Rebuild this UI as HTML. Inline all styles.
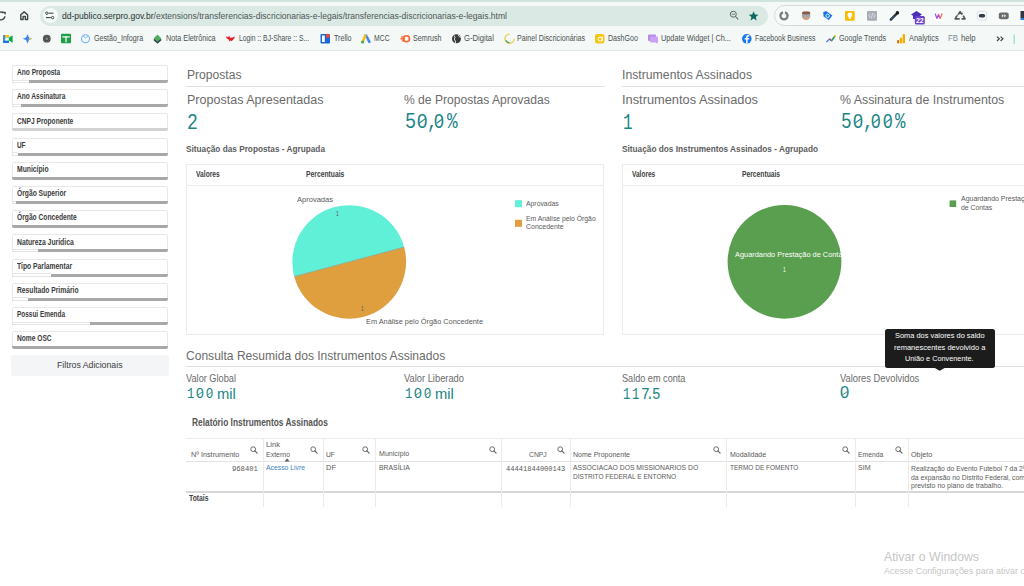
<!DOCTYPE html>
<html><head><meta charset="utf-8"><style>
html,body{margin:0;padding:0;width:1024px;height:586px;overflow:hidden;background:#fff;font-family:"Liberation Sans",sans-serif}
.t{position:absolute;white-space:nowrap}
.a{position:absolute}
</style></head><body>
<div class=a style='left:0;top:0;width:1024px;height:50px;background:#f4f8f7'></div>
<div class=a style='left:0;top:0;width:1024px;height:2px;background:#cfe4df'></div>
<div class=a style='left:0;top:49.5px;width:1024px;height:1px;background:#e3ebe9'></div>
<div class=a style='left:40px;top:5.5px;width:728px;height:20px;border-radius:10px;background:#dbe9e5'></div>
<div class=a style='left:43px;top:8px;width:15px;height:15px;border-radius:8px;background:#f6faf9'></div>
<div class=a style='left:774px;top:5px;width:270px;height:21px;border-radius:11px;border:1px solid #d3dbd9;box-sizing:border-box;background:#f6faf9'></div>
<div class=a style='left:12px;top:65.00px;width:156px;height:18px;box-sizing:border-box;border:1px solid #e8e8e8;border-radius:2px;background:#fff'></div>
<div class=a style='left:12px;top:80.00px;width:156px;height:3px;background:#a8a8a8;border-radius:0 0 2px 2px'></div>
<div class=a style='left:12px;top:79.50px;width:17.3px;height:3.5px;background:#fff;box-sizing:border-box;border:1px solid #e6e6e6;border-right:none;border-radius:0 0 0 2px'></div>
<div class=a style='left:12px;top:89.20px;width:156px;height:18px;box-sizing:border-box;border:1px solid #e8e8e8;border-radius:2px;background:#fff'></div>
<div class=a style='left:12px;top:104.20px;width:156px;height:3px;background:#a8a8a8;border-radius:0 0 2px 2px'></div>
<div class=a style='left:12px;top:103.70px;width:8.8px;height:3.5px;background:#fff;box-sizing:border-box;border:1px solid #e6e6e6;border-right:none;border-radius:0 0 0 2px'></div>
<div class=a style='left:12px;top:113.40px;width:156px;height:18px;box-sizing:border-box;border:1px solid #e8e8e8;border-radius:2px;background:#fff'></div>
<div class=a style='left:12px;top:128.40px;width:156px;height:3px;background:#d2d2d2;border-radius:0 0 2px 2px'></div>
<div class=a style='left:12px;top:137.60px;width:156px;height:18px;box-sizing:border-box;border:1px solid #e8e8e8;border-radius:2px;background:#fff'></div>
<div class=a style='left:12px;top:152.60px;width:156px;height:3px;background:#a8a8a8;border-radius:0 0 2px 2px'></div>
<div class=a style='left:12px;top:152.10px;width:5.9px;height:3.5px;background:#fff;box-sizing:border-box;border:1px solid #e6e6e6;border-right:none;border-radius:0 0 0 2px'></div>
<div class=a style='left:12px;top:161.80px;width:156px;height:18px;box-sizing:border-box;border:1px solid #e8e8e8;border-radius:2px;background:#fff'></div>
<div class=a style='left:12px;top:176.80px;width:156px;height:3px;background:#a8a8a8;border-radius:0 0 2px 2px'></div>
<div class=a style='left:12px;top:186.00px;width:156px;height:18px;box-sizing:border-box;border:1px solid #e8e8e8;border-radius:2px;background:#fff'></div>
<div class=a style='left:12px;top:201.00px;width:156px;height:3px;background:#a8a8a8;border-radius:0 0 2px 2px'></div>
<div class=a style='left:12px;top:200.50px;width:4.2px;height:3.5px;background:#fff;box-sizing:border-box;border:1px solid #e6e6e6;border-right:none;border-radius:0 0 0 2px'></div>
<div class=a style='left:12px;top:210.20px;width:156px;height:18px;box-sizing:border-box;border:1px solid #e8e8e8;border-radius:2px;background:#fff'></div>
<div class=a style='left:12px;top:225.20px;width:156px;height:3px;background:#a8a8a8;border-radius:0 0 2px 2px'></div>
<div class=a style='left:12px;top:234.40px;width:156px;height:18px;box-sizing:border-box;border:1px solid #e8e8e8;border-radius:2px;background:#fff'></div>
<div class=a style='left:12px;top:249.40px;width:156px;height:3px;background:#a8a8a8;border-radius:0 0 2px 2px'></div>
<div class=a style='left:12px;top:248.90px;width:25.9px;height:3.5px;background:#fff;box-sizing:border-box;border:1px solid #e6e6e6;border-right:none;border-radius:0 0 0 2px'></div>
<div class=a style='left:12px;top:258.60px;width:156px;height:18px;box-sizing:border-box;border:1px solid #e8e8e8;border-radius:2px;background:#fff'></div>
<div class=a style='left:12px;top:273.60px;width:156px;height:3px;background:#a8a8a8;border-radius:0 0 2px 2px'></div>
<div class=a style='left:12px;top:273.10px;width:38.7px;height:3.5px;background:#fff;box-sizing:border-box;border:1px solid #e6e6e6;border-right:none;border-radius:0 0 0 2px'></div>
<div class=a style='left:12px;top:282.80px;width:156px;height:18px;box-sizing:border-box;border:1px solid #e8e8e8;border-radius:2px;background:#fff'></div>
<div class=a style='left:12px;top:297.80px;width:156px;height:3px;background:#a8a8a8;border-radius:0 0 2px 2px'></div>
<div class=a style='left:12px;top:297.30px;width:15.6px;height:3.5px;background:#fff;box-sizing:border-box;border:1px solid #e6e6e6;border-right:none;border-radius:0 0 0 2px'></div>
<div class=a style='left:12px;top:307.00px;width:156px;height:18px;box-sizing:border-box;border:1px solid #e8e8e8;border-radius:2px;background:#fff'></div>
<div class=a style='left:12px;top:322.00px;width:156px;height:3px;background:#a8a8a8;border-radius:0 0 2px 2px'></div>
<div class=a style='left:12px;top:321.50px;width:77.7px;height:3.5px;background:#fff;box-sizing:border-box;border:1px solid #e6e6e6;border-right:none;border-radius:0 0 0 2px'></div>
<div class=a style='left:12px;top:331.20px;width:156px;height:18px;box-sizing:border-box;border:1px solid #e8e8e8;border-radius:2px;background:#fff'></div>
<div class=a style='left:12px;top:346.20px;width:156px;height:3px;background:#a8a8a8;border-radius:0 0 2px 2px'></div>
<div class=a style='left:11px;top:355px;width:158px;height:21px;border-radius:2px;background:#f4f5f7'></div>
<div class=a style='left:186px;top:86px;width:419px;height:1px;background:#e0e0e0'></div>
<div class=a style='left:186px;top:164px;width:418px;height:171px;box-sizing:border-box;border:1px solid #ebebeb'></div>
<div class=a style='left:187px;top:184.5px;width:416px;height:1px;background:#ececec'></div>
<div class=a style='left:621.5px;top:86px;width:403px;height:1px;background:#e0e0e0'></div>
<div class=a style='left:622px;top:164px;width:420px;height:171px;box-sizing:border-box;border:1px solid #ebebeb'></div>
<div class=a style='left:623px;top:184.5px;width:420px;height:1px;background:#ececec'></div>
<div class=a style='left:186px;top:366px;width:838px;height:1px;background:#e0e0e0'></div>
<svg class=a style='left:0;top:0' width=1024 height=586>
<path d='M349.20 261.90 L404.16 247.17 A56.9 56.9 0 0 0 294.24 276.63 Z' fill='#60efd7'/>
<path d='M349.20 261.90 L294.24 276.63 A56.9 56.9 0 0 0 404.16 247.17 Z' fill='#e09f3e'/>
<line x1='294.24' y1='276.63' x2='404.16' y2='247.17' stroke='#8f9a7c' stroke-width='0.7'/>
<circle cx='784.5' cy='261.8' r='56.9' fill='#5a9e4f'/>
<rect x='515' y='200.2' width='7' height='7' fill='#60efd7'/>
<rect x='515' y='219.8' width='7' height='7' fill='#e09f3e'/>
<rect x='949.6' y='200.4' width='6.6' height='6.6' fill='#5a9e4f'/>
</svg>
<div class=a style='left:186px;top:438px;width:838px;height:1px;background:#ededed'></div>
<div class=a style='left:186px;top:461px;width:838px;height:1px;background:#e2e2e2'></div>
<div class=a style='left:186px;top:491px;width:838px;height:2px;background:#d6d6d6'></div>
<div class=a style='left:263px;top:438px;width:1px;height:69px;background:#ebebeb'></div>
<div class=a style='left:323px;top:438px;width:1px;height:69px;background:#ebebeb'></div>
<div class=a style='left:375px;top:438px;width:1px;height:69px;background:#ebebeb'></div>
<div class=a style='left:501px;top:438px;width:1px;height:69px;background:#ebebeb'></div>
<div class=a style='left:570px;top:438px;width:1px;height:69px;background:#ebebeb'></div>
<div class=a style='left:726px;top:438px;width:1px;height:69px;background:#ebebeb'></div>
<div class=a style='left:855px;top:438px;width:1px;height:69px;background:#ebebeb'></div>
<div class=a style='left:908px;top:438px;width:1px;height:69px;background:#ebebeb'></div>
<svg class=a style='left:249.5px;top:446.3px' width=8 height=8 viewBox='0 0 8 8'><circle cx='3.2' cy='3.2' r='2.4' fill='none' stroke='#666' stroke-width='0.95'/><line x1='4.9' y1='4.9' x2='7.1' y2='7.1' stroke='#666' stroke-width='1.2' stroke-linecap='round'/></svg>
<svg class=a style='left:309.7px;top:446.3px' width=8 height=8 viewBox='0 0 8 8'><circle cx='3.2' cy='3.2' r='2.4' fill='none' stroke='#666' stroke-width='0.95'/><line x1='4.9' y1='4.9' x2='7.1' y2='7.1' stroke='#666' stroke-width='1.2' stroke-linecap='round'/></svg>
<svg class=a style='left:362.3px;top:446.3px' width=8 height=8 viewBox='0 0 8 8'><circle cx='3.2' cy='3.2' r='2.4' fill='none' stroke='#666' stroke-width='0.95'/><line x1='4.9' y1='4.9' x2='7.1' y2='7.1' stroke='#666' stroke-width='1.2' stroke-linecap='round'/></svg>
<svg class=a style='left:488.9px;top:446.3px' width=8 height=8 viewBox='0 0 8 8'><circle cx='3.2' cy='3.2' r='2.4' fill='none' stroke='#666' stroke-width='0.95'/><line x1='4.9' y1='4.9' x2='7.1' y2='7.1' stroke='#666' stroke-width='1.2' stroke-linecap='round'/></svg>
<svg class=a style='left:556.6px;top:446.3px' width=8 height=8 viewBox='0 0 8 8'><circle cx='3.2' cy='3.2' r='2.4' fill='none' stroke='#666' stroke-width='0.95'/><line x1='4.9' y1='4.9' x2='7.1' y2='7.1' stroke='#666' stroke-width='1.2' stroke-linecap='round'/></svg>
<svg class=a style='left:713.3px;top:446.3px' width=8 height=8 viewBox='0 0 8 8'><circle cx='3.2' cy='3.2' r='2.4' fill='none' stroke='#666' stroke-width='0.95'/><line x1='4.9' y1='4.9' x2='7.1' y2='7.1' stroke='#666' stroke-width='1.2' stroke-linecap='round'/></svg>
<svg class=a style='left:842.4px;top:446.3px' width=8 height=8 viewBox='0 0 8 8'><circle cx='3.2' cy='3.2' r='2.4' fill='none' stroke='#666' stroke-width='0.95'/><line x1='4.9' y1='4.9' x2='7.1' y2='7.1' stroke='#666' stroke-width='1.2' stroke-linecap='round'/></svg>
<svg class=a style='left:895.3px;top:446.3px' width=8 height=8 viewBox='0 0 8 8'><circle cx='3.2' cy='3.2' r='2.4' fill='none' stroke='#666' stroke-width='0.95'/><line x1='4.9' y1='4.9' x2='7.1' y2='7.1' stroke='#666' stroke-width='1.2' stroke-linecap='round'/></svg>
<svg class=a style='left:284px;top:458px' width=7 height=4><path d='M0.5 3.6 L3.1 0.4 L5.7 3.6 Z' fill='#595959'/></svg>
<div class=a style='left:885px;top:329px;width:109.5px;height:38.6px;border-radius:2.5px;background:#1c1c1c'></div>
<svg class=a style='left:933px;top:367px' width=14 height=5><path d='M0 0 L6.7 3.8 L13.4 0 Z' fill='#1c1c1c'/></svg>
<svg class=a style='left:0;top:0' width=1024 height=50>
<!-- reload (cut off) -->
<path d='M4.9 16.2 A3.9 3.9 0 1 1 3.6 13' fill='none' stroke='#3c4745' stroke-width='1.4'/>
<path d='M2.6 11.6 L5.9 11.9 L5.6 15.1 Z' fill='#3c4745'/>
<!-- home -->
<path d='M20.8 19.5 V14.8 L24.2 11.9 L27.6 14.8 V19.5 H25.3 V16.4 H23.1 V19.5 Z' fill='none' stroke='#3c4745' stroke-width='1.4' stroke-linejoin='round'/>
<!-- site info tune icon -->
<line x1='48.6' y1='13.2' x2='53.4' y2='13.2' stroke='#3c4745' stroke-width='1.1'/>
<circle cx='46.8' cy='13.2' r='1.2' fill='none' stroke='#3c4745' stroke-width='1'/>
<line x1='46' y1='17.6' x2='50.8' y2='17.6' stroke='#3c4745' stroke-width='1.1'/>
<circle cx='52.6' cy='17.6' r='1.2' fill='none' stroke='#3c4745' stroke-width='1'/>
<!-- zoom -->
<circle cx='733.3' cy='14.2' r='3' fill='none' stroke='#5f6665' stroke-width='1'/>
<line x1='731.8' y1='14.2' x2='734.8' y2='14.2' stroke='#5f6665' stroke-width='0.9'/>
<line x1='735.5' y1='16.5' x2='738.2' y2='19.4' stroke='#5f6665' stroke-width='1.1'/>
<!-- star -->
<path d='M753.6 11.2 L755 14.6 L758.5 14.8 L755.8 17 L756.7 20.4 L753.6 18.5 L750.5 20.4 L751.4 17 L748.7 14.8 L752.2 14.6 Z' fill='#0f6863'/>
<!-- ext 1 circle O -->
<path d='M785 12.34 A3.6 3.6 0 1 1 783 12.34' fill='none' stroke='#7a7a7a' stroke-width='2.3'/>
<!-- face -->
<circle cx='806.1' cy='15.7' r='4.3' fill='#d49a7c'/>
<rect x='802' y='11.5' width='8.3' height='3' rx='1.5' fill='#8a5a45'/>
<rect x='802.5' y='14.6' width='3' height='2.4' rx='0.8' fill='#7fb0d0'/>
<rect x='806.7' y='14.6' width='3' height='2.4' rx='0.8' fill='#7fb0d0'/>
<!-- tag -->
<path d='M823.2 12.2 L826 11 L832.4 15.4 L828.8 20 L823.6 16.6 Z' fill='#1a73e8'/>
<circle cx='827.6' cy='15.8' r='1.7' fill='none' stroke='#fff' stroke-width='0.9'/>
<!-- keep bulb -->
<rect x='845' y='11' width='9.7' height='9.7' rx='1' fill='#fbbc04'/>
<circle cx='849.85' cy='15' r='2.4' fill='#fff'/>
<rect x='848.7' y='16.8' width='2.3' height='2' fill='#fff'/>
<!-- code box -->
<rect x='867' y='11' width='10' height='9.7' rx='1' fill='#a9abb6'/>
<path d='M870.3 13.6 L869 15.8 L870.3 18 M873.7 13.6 L875 15.8 L873.7 18 M872.6 13.2 L871.4 18.4' fill='none' stroke='#e8e9ee' stroke-width='0.8'/>
<!-- dropper -->
<path d='M890.8 19.6 L896 14.4' stroke='#2a2a2a' stroke-width='2.4' stroke-linecap='round'/>
<path d='M891.2 19.2 L894.5 15.9' stroke='#3c6fd8' stroke-width='1' stroke-linecap='round'/>
<circle cx='897.4' cy='12.9' r='1.8' fill='#1d1d1d'/>
<!-- mortarboard + badge -->
<path d='M911 14.5 L916.5 11 L922 14.5 L916.5 18 Z' fill='#4a2fbd'/>
<rect x='913' y='15' width='7' height='4' fill='#4a2fbd'/>
<rect x='914.8' y='16.1' width='10' height='8.4' rx='1.5' fill='#6a3fc8'/>
<text x='919.8' y='23.2' font-family='Liberation Sans' font-size='7' font-weight='700' fill='#fff' text-anchor='middle'>22</text>
<!-- W -->
<defs><linearGradient id='wg' x1='0' x2='1'><stop offset='0' stop-color='#6a5cff'/><stop offset='0.5' stop-color='#e040c0'/><stop offset='1' stop-color='#ff7a3a'/></linearGradient></defs>
<rect x='933.5' y='11' width='10' height='10' rx='2' fill='#ffffff'/>
<path d='M935.2 13.6 L936.8 18.4 L938.6 14.6 L940.2 18.4 L942.2 13.2' fill='none' stroke='url(#wg)' stroke-width='1.3' stroke-linejoin='round'/>
<!-- recycle -->
<path d='M958.2 14.6 L960.1 11.6 L962 14.6 M963.2 15.6 L965 18.8 L961.6 18.8 M957 15.6 L955.2 18.8 L958.8 18.8' fill='none' stroke='#555' stroke-width='1.7' stroke-linejoin='round'/>
<path d='M961.2 13.2 L962.8 12.6 L962.6 14.4 Z M959.5 20.2 L958.4 18.8 L959.9 17.8 Z M956.3 15.2 L957.8 14.4 L958.2 16 Z' fill='#555'/>
<!-- square oval -->
<rect x='977.3' y='11.3' width='9.4' height='8.8' rx='2' fill='#fbfcfd' stroke='#cfd6dc' stroke-width='0.7'/>
<rect x='978.8' y='14' width='6.4' height='3.4' rx='1.7' fill='#2f3d4a'/>
<!-- video -->
<rect x='998.8' y='12.5' width='9.9' height='6.7' rx='2' fill='#6b6b6b'/>
<path d='M1001.9 14.3 L1003.8 15.85 L1001.9 17.4 Z M1004.2 14.3 L1006.1 15.85 L1004.2 17.4 Z' fill='#f0f0f0'/>
<!-- partial icon -->
<rect x='1020.5' y='11' width='5' height='7' fill='#303540'/>
<rect x='1020.5' y='18' width='5' height='2' fill='#2b7de0'/>

<!-- bookmarks -->
<!-- meet -->
<path d='M3.2 35 H9 V43 H3.2 Z' fill='#1e8e3e'/>
<path d='M3.2 35 H9 V37.2 H3.2 Z' fill='#fbbc04'/>
<path d='M3.2 35 L5 35 V43 H3.2 Z' fill='#4285f4'/>
<path d='M3.2 40.8 H9 V43 H3.2 Z' fill='#1a73e8'/>
<path d='M5.2 37.4 H8.8 V40.6 H5.2 Z' fill='#ffffff'/>
<path d='M9 37.5 L12.6 35.2 V42.8 L9 40.5 Z' fill='#00ac47'/>
<!-- sparkle star blue/yellow -->
<path d='M27.5 34.2 L29 37.6 L32.2 38.8 L29 40 L27.5 43.4 L26 40 L22.8 38.8 L26 37.6 Z' fill='#3b82f6'/>
<path d='M29 37.6 L32.2 38.8 L29.5 39.6 L28.5 42.5 Z' fill='#f6c33b'/>
<!-- gear gray (openai-like) -->
<circle cx='46.8' cy='38.7' r='3.9' fill='#4a4a4a'/>
<circle cx='46.8' cy='38.7' r='2.9' fill='none' stroke='#9a9a9a' stroke-width='0.6' stroke-dasharray='1.2 0.8'/>
<circle cx='46.8' cy='38.7' r='1.3' fill='#8a8a8a'/>
<!-- green sheet -->
<rect x='61' y='33.7' width='10' height='9.6' rx='1' fill='#1e9e47'/>
<rect x='62.3' y='36.3' width='7.4' height='1.2' fill='#fff'/>
<rect x='65.4' y='36.3' width='1.2' height='6' fill='#fff'/>
<!-- circle outline blue -->
<circle cx='85.5' cy='38.8' r='4' fill='none' stroke='#6fb4f5' stroke-width='1.1'/>
<path d='M83 35.8 L85.5 38.2 L88 35.8' fill='none' stroke='#6fb4f5' stroke-width='1'/>
<!-- green diamond -->
<path d='M157.5 34.4 L161.3 38.2 L157.5 42 L153.7 38.2 Z' fill='#4caf5e'/>
<path d='M153.7 39.2 L157.5 43.2 L161.3 39.2 L161.3 40.6 L157.5 43.6 L153.7 40.6 Z' fill='#2b3a44'/>
<path d='M154.2 39.4 L157.5 42.6 L160.8 39.4' fill='none' stroke='#2b3a44' stroke-width='1.3'/>
<!-- red bird -->
<path d='M225.8 36.2 L228 37.2 L229.2 35.8 L230 37.8 L232.4 37.6 L235.2 36.4 L233.8 39 L231.6 41.2 L230.4 40.2 L229.6 41.8 L228.6 39.6 L226.8 38.6 Z' fill='#e2202a'/>
<!-- trello -->
<rect x='320.5' y='34' width='9.5' height='9.5' rx='1.3' fill='#1868db'/>
<rect x='322' y='35.5' width='2.8' height='6.5' fill='#fff'/>
<circle cx='327.8' cy='35.8' r='2.1' fill='#e5493a'/>
<!-- google ads -->
<path d='M364.4 34.6 L367 34.6 L371 42.2 L368.6 43.2 Z' fill='#4285f4'/>
<path d='M364.4 34.6 L366.8 35.6 L363.5 42.6 L361.4 41.8 Z' fill='#fbbc04'/>
<circle cx='362.6' cy='42' r='1.5' fill='#34a853'/>
<!-- semrush -->
<path d='M400.5 38.8 H405' stroke='#ff642d' stroke-width='1.5'/>
<circle cx='406.5' cy='38.8' r='3' fill='none' stroke='#ff642d' stroke-width='1.6'/>
<path d='M401 36.8 H404.2 M401.8 40.8 H404.2' stroke='#ff642d' stroke-width='1.2'/>
<!-- globe -->
<circle cx='456.5' cy='38.8' r='4.5' fill='#3a3a3a'/>
<path d='M454 35.4 Q456 37.5 454.3 39 Q455.8 41 455.5 43 M458 34.8 Q459 37 460.8 37.5' fill='none' stroke='#eee' stroke-width='0.9'/>
<!-- painel icon -->
<path d='M509.5 34.3 A4.5 4.5 0 1 0 514 38.8' fill='none' stroke='#e7d66b' stroke-width='1.5'/>
<path d='M506 40 A3 3 0 0 0 509.5 42.5' fill='none' stroke='#3fa06a' stroke-width='1.2'/>
<!-- dashgoo -->
<rect x='595' y='34' width='9.5' height='9.5' rx='2' fill='#f5c518'/>
<circle cx='600.2' cy='39.2' r='2' fill='none' stroke='#fff' stroke-width='1'/>
<line x1='602.2' y1='36.4' x2='602.2' y2='41.2' stroke='#fff' stroke-width='1'/>
<!-- purple chat -->
<rect x='648' y='34.5' width='8' height='6.5' rx='1' fill='#b68bea'/>
<rect x='650' y='36.5' width='8' height='6' rx='1' fill='#c9a3f2'/>
<path d='M655 42 L657.5 43.7 V41 Z' fill='#c9a3f2'/>
<!-- facebook -->
<circle cx='746.8' cy='38.8' r='4.8' fill='#1877f2'/>
<path d='M747.6 43.6 V39.6 H749 L749.2 38.1 H747.6 V37.2 Q747.6 36.5 748.4 36.5 H749.3 V35.2 Q748.6 35.1 748 35.1 Q746.1 35.1 746.1 37 V38.1 H744.7 V39.6 H746.1 V43.6 Z' fill='#fff'/>
<!-- google trends -->
<path d='M826.5 42 L829.5 39 L831.5 40.8 L835 36' fill='none' stroke='#4285f4' stroke-width='1.4' stroke-linejoin='round'/>
<path d='M829.5 39 L831.5 40.8' stroke='#ea4335' stroke-width='1.4'/>
<path d='M831.5 40.8 L835 36' stroke='#34a853' stroke-width='1.4'/>
<circle cx='835' cy='36' r='0.9' fill='#fbbc04'/>
<!-- analytics -->
<rect x='897' y='40' width='2.2' height='3.5' rx='1' fill='#e37400'/>
<rect x='899.8' y='37.5' width='2.2' height='6' rx='1' fill='#f9ab00'/>
<rect x='902.6' y='34' width='2.4' height='9.5' rx='1' fill='#f9ab00'/>
<!-- chevrons -->
<path d='M997 36.6 L999.3 38.8 L997 41 M1000.6 36.6 L1002.9 38.8 L1000.6 41' fill='none' stroke='#3c4745' stroke-width='1.2'/>
<!-- teal bar -->
<rect x='1013.6' y='34.5' width='1.2' height='9.5' fill='#8fdcd2'/>
</svg>
<svg class=a style='left:0;top:0' width=1024 height=586><line x1='419.18' y1='123.21' x2='424.88' y2='118.94' stroke='#1a8585' stroke-width='1.06'/></svg>
<svg class=a style='left:0;top:0' width=1024 height=586><line x1='436.90' y1='123.21' x2='442.34' y2='118.94' stroke='#1a8585' stroke-width='1.06'/></svg>
<svg class=a style='left:0;top:0' width=1024 height=586><line x1='855.12' y1='123.18' x2='860.62' y2='118.98' stroke='#1a8585' stroke-width='1.05'/></svg>
<svg class=a style='left:0;top:0' width=1024 height=586><line x1='873.24' y1='123.18' x2='878.49' y2='118.98' stroke='#1a8585' stroke-width='1.05'/></svg>
<svg class=a style='left:0;top:0' width=1024 height=586><line x1='885.14' y1='123.18' x2='890.39' y2='118.98' stroke='#1a8585' stroke-width='1.05'/></svg>
<svg class=a style='left:0;top:0' width=1024 height=586><line x1='197.94' y1='394.93' x2='202.23' y2='391.97' stroke='#1a8585' stroke-width='0.85'/></svg>
<svg class=a style='left:0;top:0' width=1024 height=586><line x1='207.82' y1='394.93' x2='211.72' y2='391.97' stroke='#1a8585' stroke-width='0.85'/></svg>
<svg class=a style='left:0;top:0' width=1024 height=586><line x1='415.94' y1='394.93' x2='420.23' y2='391.97' stroke='#1a8585' stroke-width='0.85'/></svg>
<svg class=a style='left:0;top:0' width=1024 height=586><line x1='425.82' y1='394.93' x2='429.72' y2='391.97' stroke='#1a8585' stroke-width='0.85'/></svg>
<svg class=a style='left:0;top:0' width=1024 height=586><line x1='841.98' y1='395.04' x2='847.04' y2='391.85' stroke='#1a8585' stroke-width='0.85'/></svg>
<div class=t style='left:62.00px;transform-origin:0 0;top:12.14px;font-size:8.7px;line-height:8.7px;font-weight:400;color:#4d5553;font-family:"Liberation Sans", sans-serif;transform:scaleX(0.9839);'><span style='color:#2a302f'>dd-publico.serpro.gov.br</span>/extensions/transferencias-discricionarias-e-legais/transferencias-discricionarias-e-legais.html</div>
<div class=t style='left:16.50px;transform-origin:0 0;top:69.16px;font-size:8.2px;line-height:8.2px;font-weight:700;color:#3a3a3a;font-family:"Liberation Sans", sans-serif;transform:scaleX(0.8047);'>Ano Proposta</div>
<div class=t style='left:16.50px;transform-origin:0 0;top:93.36px;font-size:8.2px;line-height:8.2px;font-weight:700;color:#3a3a3a;font-family:"Liberation Sans", sans-serif;transform:scaleX(0.8023);'>Ano Assinatura</div>
<div class=t style='left:16.50px;transform-origin:0 0;top:117.56px;font-size:8.2px;line-height:8.2px;font-weight:700;color:#3a3a3a;font-family:"Liberation Sans", sans-serif;transform:scaleX(0.8088);'>CNPJ Proponente</div>
<div class=t style='left:16.50px;transform-origin:0 0;top:141.76px;font-size:8.2px;line-height:8.2px;font-weight:700;color:#3a3a3a;font-family:"Liberation Sans", sans-serif;transform:scaleX(0.7783);'>UF</div>
<div class=t style='left:16.50px;transform-origin:0 0;top:165.96px;font-size:8.2px;line-height:8.2px;font-weight:700;color:#3a3a3a;font-family:"Liberation Sans", sans-serif;transform:scaleX(0.8272);'>Município</div>
<div class=t style='left:16.50px;transform-origin:0 0;top:190.16px;font-size:8.2px;line-height:8.2px;font-weight:700;color:#3a3a3a;font-family:"Liberation Sans", sans-serif;transform:scaleX(0.8191);'>Órgão Superior</div>
<div class=t style='left:16.50px;transform-origin:0 0;top:214.36px;font-size:8.2px;line-height:8.2px;font-weight:700;color:#3a3a3a;font-family:"Liberation Sans", sans-serif;transform:scaleX(0.8164);'>Órgão Concedente</div>
<div class=t style='left:16.50px;transform-origin:0 0;top:238.56px;font-size:8.2px;line-height:8.2px;font-weight:700;color:#3a3a3a;font-family:"Liberation Sans", sans-serif;transform:scaleX(0.8306);'>Natureza Jurídica</div>
<div class=t style='left:16.50px;transform-origin:0 0;top:262.76px;font-size:8.2px;line-height:8.2px;font-weight:700;color:#3a3a3a;font-family:"Liberation Sans", sans-serif;transform:scaleX(0.8255);'>Tipo Parlamentar</div>
<div class=t style='left:16.50px;transform-origin:0 0;top:286.96px;font-size:8.2px;line-height:8.2px;font-weight:700;color:#3a3a3a;font-family:"Liberation Sans", sans-serif;transform:scaleX(0.8191);'>Resultado Primário</div>
<div class=t style='left:16.50px;transform-origin:0 0;top:311.16px;font-size:8.2px;line-height:8.2px;font-weight:700;color:#3a3a3a;font-family:"Liberation Sans", sans-serif;transform:scaleX(0.7871);'>Possui Emenda</div>
<div class=t style='left:16.50px;transform-origin:0 0;top:335.36px;font-size:8.2px;line-height:8.2px;font-weight:700;color:#3a3a3a;font-family:"Liberation Sans", sans-serif;transform:scaleX(0.8091);'>Nome OSC</div>
<div class=t style='left:57.00px;transform-origin:0 0;top:361.13px;font-size:9.3px;line-height:9.3px;font-weight:400;color:#3a3a3a;font-family:"Liberation Sans", sans-serif;transform:scaleX(0.9389);'>Filtros Adicionais</div>
<div class=t style='left:186.50px;transform-origin:0 0;top:69.34px;font-size:12px;line-height:12px;font-weight:400;color:#6b6b6b;font-family:"Liberation Sans", sans-serif;transform:scaleX(1.0087);'>Propostas</div>
<div class=t style='left:186.50px;transform-origin:0 0;top:93.79px;font-size:12.3px;line-height:12.3px;font-weight:400;color:#6b6b6b;font-family:"Liberation Sans", sans-serif;transform:scaleX(1.0187);'>Propostas Apresentadas</div>
<div class=t style='left:404.20px;transform-origin:0 0;top:93.79px;font-size:12.3px;line-height:12.3px;font-weight:400;color:#6b6b6b;font-family:"Liberation Sans", sans-serif;transform:scaleX(0.9829);'>% de Propostas Aprovadas</div>
<div class=t style='left:186.00px;transform-origin:0 0;top:143.87px;font-size:9.6px;line-height:9.6px;font-weight:700;color:#5c5c5c;font-family:"Liberation Sans", sans-serif;transform:scaleX(0.8595);'>Situação das Propostas - Agrupada</div>
<div class=t style='left:196.00px;transform-origin:0 0;top:170.96px;font-size:8.2px;line-height:8.2px;font-weight:700;color:#404040;font-family:"Liberation Sans", sans-serif;transform:scaleX(0.8133);'>Valores</div>
<div class=t style='left:305.70px;transform-origin:0 0;top:170.96px;font-size:8.2px;line-height:8.2px;font-weight:700;color:#404040;font-family:"Liberation Sans", sans-serif;transform:scaleX(0.8250);'>Percentuais</div>
<div class=t style='left:622.10px;transform-origin:0 0;top:69.14px;font-size:12px;line-height:12px;font-weight:400;color:#6b6b6b;font-family:"Liberation Sans", sans-serif;transform:scaleX(1.0204);'>Instrumentos Assinados</div>
<div class=t style='left:622.00px;transform-origin:0 0;top:93.89px;font-size:12.3px;line-height:12.3px;font-weight:400;color:#6b6b6b;font-family:"Liberation Sans", sans-serif;transform:scaleX(1.0416);'>Instrumentos Assinados</div>
<div class=t style='left:840.00px;transform-origin:0 0;top:93.89px;font-size:12.3px;line-height:12.3px;font-weight:400;color:#6b6b6b;font-family:"Liberation Sans", sans-serif;transform:scaleX(1.0057);'>% Assinatura de Instrumentos</div>
<div class=t style='left:622.10px;transform-origin:0 0;top:144.07px;font-size:9.6px;line-height:9.6px;font-weight:700;color:#5c5c5c;font-family:"Liberation Sans", sans-serif;transform:scaleX(0.8618);'>Situação dos Instrumentos Assinados - Agrupado</div>
<div class=t style='left:632.20px;transform-origin:0 0;top:170.96px;font-size:8.2px;line-height:8.2px;font-weight:700;color:#404040;font-family:"Liberation Sans", sans-serif;transform:scaleX(0.7961);'>Valores</div>
<div class=t style='left:741.70px;transform-origin:0 0;top:170.96px;font-size:8.2px;line-height:8.2px;font-weight:700;color:#404040;font-family:"Liberation Sans", sans-serif;transform:scaleX(0.8207);'>Percentuais</div>
<div class=t style='left:186.00px;transform-origin:0 0;top:348.66px;font-size:13.4px;line-height:13.4px;font-weight:400;color:#6b6b6b;font-family:"Liberation Sans", sans-serif;transform:scaleX(0.8998);'>Consulta Resumida dos Instrumentos Assinados</div>
<div class=t style='left:186.00px;transform-origin:0 0;top:372.53px;font-size:10.6px;line-height:10.6px;font-weight:400;color:#6b6b6b;font-family:"Liberation Sans", sans-serif;transform:scaleX(0.8693);'>Valor Global</div>
<div class=t style='left:404.20px;transform-origin:0 0;top:372.53px;font-size:10.6px;line-height:10.6px;font-weight:400;color:#6b6b6b;font-family:"Liberation Sans", sans-serif;transform:scaleX(0.8807);'>Valor Liberado</div>
<div class=t style='left:622.20px;transform-origin:0 0;top:372.53px;font-size:10.6px;line-height:10.6px;font-weight:400;color:#6b6b6b;font-family:"Liberation Sans", sans-serif;transform:scaleX(0.8611);'>Saldo em conta</div>
<div class=t style='left:839.50px;transform-origin:0 0;top:372.53px;font-size:10.6px;line-height:10.6px;font-weight:400;color:#6b6b6b;font-family:"Liberation Sans", sans-serif;transform:scaleX(0.8820);'>Valores Devolvidos</div>
<div class=t style='left:191.80px;transform-origin:0 0;top:417.78px;font-size:10.3px;line-height:10.3px;font-weight:700;color:#555555;font-family:"Liberation Sans", sans-serif;transform:scaleX(0.8119);'>Relatório Instrumentos Assinados</div>
<div class=t style='left:297.40px;transform-origin:0 0;top:196.13px;font-size:8px;line-height:8px;font-weight:400;color:#595959;font-family:"Liberation Sans", sans-serif;transform:scaleX(0.9412);'>Aprovadas</div>
<div class=t style='left:335.50px;transform-origin:0 0;top:209.77px;font-size:7px;line-height:7px;font-weight:400;color:#595959;font-family:"Liberation Sans", sans-serif;transform:scaleX(0.7168);'>1</div>
<div class=t style='left:360.80px;transform-origin:0 0;top:305.07px;font-size:7px;line-height:7px;font-weight:400;color:#595959;font-family:"Liberation Sans", sans-serif;transform:scaleX(0.7168);'>1</div>
<div class=t style='left:365.80px;transform-origin:0 0;top:317.83px;font-size:8px;line-height:8px;font-weight:400;color:#595959;font-family:"Liberation Sans", sans-serif;transform:scaleX(0.9198);'>Em Análise pelo Órgão Concedente</div>
<div class=t style='left:526.30px;transform-origin:0 0;top:199.54px;font-size:8.1px;line-height:8.1px;font-weight:400;color:#595959;font-family:"Liberation Sans", sans-serif;transform:scaleX(0.8449);'>Aprovadas</div>
<div class=t style='left:526.30px;transform-origin:0 0;top:215.04px;font-size:8.1px;line-height:8.1px;font-weight:400;color:#595959;font-family:"Liberation Sans", sans-serif;transform:scaleX(0.8418);'>Em Análise pelo Órgão</div>
<div class=t style='left:526.30px;transform-origin:0 0;top:223.14px;font-size:8.1px;line-height:8.1px;font-weight:400;color:#595959;font-family:"Liberation Sans", sans-serif;transform:scaleX(0.8613);'>Concedente</div>
<div class=t style='left:960.80px;transform-origin:0 0;top:195.04px;font-size:8.1px;line-height:8.1px;font-weight:400;color:#595959;font-family:"Liberation Sans", sans-serif;transform:scaleX(0.8600);'>Aguardando Prestação</div>
<div class=t style='left:960.80px;transform-origin:0 0;top:203.64px;font-size:8.1px;line-height:8.1px;font-weight:400;color:#595959;font-family:"Liberation Sans", sans-serif;transform:scaleX(0.8454);'>de Contas</div>
<div class=t style='left:735.00px;transform-origin:0 0;top:251.47px;font-size:7.6px;line-height:7.6px;font-weight:400;color:#ffffff;font-family:"Liberation Sans", sans-serif;transform:scaleX(0.9718);'>Aguardando Prestação de Conta</div>
<div class=t style='left:783.20px;transform-origin:0 0;top:265.77px;font-size:7px;line-height:7px;font-weight:400;color:#ffffff;font-family:"Liberation Sans", sans-serif;transform:scaleX(0.7168);'>1</div>
<div class=t style='left:190.70px;transform-origin:0 0;top:450.57px;font-size:7.6px;line-height:7.6px;font-weight:400;color:#595959;font-family:"Liberation Sans", sans-serif;transform:scaleX(0.9570);'>Nº Instrumento</div>
<div class=t style='left:265.90px;transform-origin:0 0;top:441.07px;font-size:7.6px;line-height:7.6px;font-weight:400;color:#595959;font-family:"Liberation Sans", sans-serif;transform:scaleX(1.0045);'>Link</div>
<div class=t style='left:265.90px;transform-origin:0 0;top:450.57px;font-size:7.6px;line-height:7.6px;font-weight:400;color:#595959;font-family:"Liberation Sans", sans-serif;transform:scaleX(0.9170);'>Externo</div>
<div class=t style='left:326.00px;transform-origin:0 0;top:450.57px;font-size:7.6px;line-height:7.6px;font-weight:400;color:#595959;font-family:"Liberation Sans", sans-serif;transform:scaleX(0.8889);'>UF</div>
<div class=t style='left:378.50px;transform-origin:0 0;top:450.47px;font-size:7.6px;line-height:7.6px;font-weight:400;color:#595959;font-family:"Liberation Sans", sans-serif;transform:scaleX(0.9292);'>Município</div>
<div class=t style='left:528.50px;transform-origin:0 0;top:450.57px;font-size:7.6px;line-height:7.6px;font-weight:400;color:#595959;font-family:"Liberation Sans", sans-serif;transform:scaleX(0.8920);'>CNPJ</div>
<div class=t style='left:572.50px;transform-origin:0 0;top:450.57px;font-size:7.6px;line-height:7.6px;font-weight:400;color:#595959;font-family:"Liberation Sans", sans-serif;transform:scaleX(0.9247);'>Nome Proponente</div>
<div class=t style='left:729.70px;transform-origin:0 0;top:450.57px;font-size:7.6px;line-height:7.6px;font-weight:400;color:#595959;font-family:"Liberation Sans", sans-serif;transform:scaleX(0.9194);'>Modalidade</div>
<div class=t style='left:858.40px;transform-origin:0 0;top:450.57px;font-size:7.6px;line-height:7.6px;font-weight:400;color:#595959;font-family:"Liberation Sans", sans-serif;transform:scaleX(0.8906);'>Emenda</div>
<div class=t style='left:911.10px;transform-origin:0 0;top:450.57px;font-size:7.6px;line-height:7.6px;font-weight:400;color:#595959;font-family:"Liberation Sans", sans-serif;transform:scaleX(0.9520);'>Objeto</div>
<div class=t style='left:232.00px;transform-origin:0 0;top:464.77px;font-size:8px;line-height:8px;font-weight:400;color:#595959;font-family:"Liberation Mono", monospace;transform:scaleX(0.8954);'>968401</div>
<div class=t style='left:266.00px;transform-origin:0 0;top:464.30px;font-size:7.8px;line-height:7.8px;font-weight:400;color:#3f7fbf;font-family:"Liberation Sans", sans-serif;transform:scaleX(0.8736);'>Acesso Livre</div>
<div class=t style='left:326.00px;transform-origin:0 0;top:464.30px;font-size:7.8px;line-height:7.8px;font-weight:400;color:#595959;font-family:"Liberation Sans", sans-serif;transform:scaleX(0.9610);'>DF</div>
<div class=t style='left:378.50px;transform-origin:0 0;top:464.20px;font-size:7.8px;line-height:7.8px;font-weight:400;color:#595959;font-family:"Liberation Sans", sans-serif;transform:scaleX(0.8773);'>BRASÍLIA</div>
<div class=t style='left:505.80px;transform-origin:0 0;top:464.67px;font-size:8px;line-height:8px;font-weight:400;color:#595959;font-family:"Liberation Mono", monospace;transform:scaleX(0.8822);'>44441844000143</div>
<div class=t style='left:572.50px;transform-origin:0 0;top:464.20px;font-size:7.8px;line-height:7.8px;font-weight:400;color:#595959;font-family:"Liberation Sans", sans-serif;transform:scaleX(0.8704);'>ASSOCIACAO DOS MISSIONARIOS DO</div>
<div class=t style='left:572.50px;transform-origin:0 0;top:473.30px;font-size:7.8px;line-height:7.8px;font-weight:400;color:#595959;font-family:"Liberation Sans", sans-serif;transform:scaleX(0.8418);'>DISTRITO FEDERAL E ENTORNO</div>
<div class=t style='left:729.70px;transform-origin:0 0;top:464.20px;font-size:7.8px;line-height:7.8px;font-weight:400;color:#595959;font-family:"Liberation Sans", sans-serif;transform:scaleX(0.8312);'>TERMO DE FOMENTO</div>
<div class=t style='left:858.40px;transform-origin:0 0;top:464.20px;font-size:7.8px;line-height:7.8px;font-weight:400;color:#595959;font-family:"Liberation Sans", sans-serif;transform:scaleX(0.9081);'>SIM</div>
<div class=t style='left:911.10px;transform-origin:0 0;top:464.50px;font-size:7.8px;line-height:7.8px;font-weight:400;color:#595959;font-family:"Liberation Sans", sans-serif;transform:scaleX(0.8750);'>Realização do Evento Futebol 7 da 2ª etapa</div>
<div class=t style='left:911.10px;transform-origin:0 0;top:473.60px;font-size:7.8px;line-height:7.8px;font-weight:400;color:#595959;font-family:"Liberation Sans", sans-serif;transform:scaleX(0.8800);'>da expansão no Distrito Federal, como</div>
<div class=t style='left:911.10px;transform-origin:0 0;top:482.40px;font-size:7.8px;line-height:7.8px;font-weight:400;color:#595959;font-family:"Liberation Sans", sans-serif;transform:scaleX(0.8955);'>previsto no plano de trabalho.</div>
<div class=t style='left:188.80px;transform-origin:0 0;top:495.36px;font-size:8.2px;line-height:8.2px;font-weight:700;color:#404040;font-family:"Liberation Sans", sans-serif;transform:scaleX(0.8292);'>Totais</div>
<div class=t style='left:894.60px;transform-origin:0 0;top:332.27px;font-size:7.6px;line-height:7.6px;font-weight:400;color:#ffffff;font-family:"Liberation Sans", sans-serif;transform:scaleX(0.9781);'>Soma dos valores do saldo</div>
<div class=t style='left:893.90px;transform-origin:0 0;top:343.97px;font-size:7.6px;line-height:7.6px;font-weight:400;color:#ffffff;font-family:"Liberation Sans", sans-serif;transform:scaleX(0.9886);'>remanescentes devolvido a</div>
<div class=t style='left:905.30px;transform-origin:0 0;top:355.27px;font-size:7.6px;line-height:7.6px;font-weight:400;color:#ffffff;font-family:"Liberation Sans", sans-serif;transform:scaleX(0.9613);'>União e Convenente.</div>
<div class=t style='left:883.50px;transform-origin:0 0;top:551.36px;font-size:12.8px;line-height:12.8px;font-weight:400;color:#c6c6c6;font-family:"Liberation Sans", sans-serif;transform:scaleX(0.9610);'>Ativar o Windows</div>
<div class=t style='left:883.50px;transform-origin:0 0;top:567.03px;font-size:9.3px;line-height:9.3px;font-weight:400;color:#c6c6c6;font-family:"Liberation Sans", sans-serif;transform:scaleX(0.9600);'>Acesse Configurações para ativar o Windows.</div>
<div class=t style='left:94.20px;transform-origin:0 0;top:34.27px;font-size:8.3px;line-height:8.3px;font-weight:400;color:#4a5150;font-family:"Liberation Sans", sans-serif;transform:scaleX(0.8583);'>Gestão_Infogra</div>
<div class=t style='left:166.45px;transform-origin:0 0;top:34.27px;font-size:8.3px;line-height:8.3px;font-weight:400;color:#4a5150;font-family:"Liberation Sans", sans-serif;transform:scaleX(0.8742);'>Nota Eletrônica</div>
<div class=t style='left:239.20px;transform-origin:0 0;top:34.27px;font-size:8.3px;line-height:8.3px;font-weight:400;color:#4a5150;font-family:"Liberation Sans", sans-serif;transform:scaleX(0.8172);'>Login :: BJ-Share :: S...</div>
<div class=t style='left:333.70px;transform-origin:0 0;top:34.27px;font-size:8.3px;line-height:8.3px;font-weight:400;color:#4a5150;font-family:"Liberation Sans", sans-serif;transform:scaleX(0.8605);'>Trello</div>
<div class=t style='left:374.45px;transform-origin:0 0;top:34.27px;font-size:8.3px;line-height:8.3px;font-weight:400;color:#4a5150;font-family:"Liberation Sans", sans-serif;transform:scaleX(0.8251);'>MCC</div>
<div class=t style='left:413.20px;transform-origin:0 0;top:34.27px;font-size:8.3px;line-height:8.3px;font-weight:400;color:#4a5150;font-family:"Liberation Sans", sans-serif;transform:scaleX(0.8614);'>Semrush</div>
<div class=t style='left:464.45px;transform-origin:0 0;top:34.27px;font-size:8.3px;line-height:8.3px;font-weight:400;color:#4a5150;font-family:"Liberation Sans", sans-serif;transform:scaleX(0.9247);'>G-Digital</div>
<div class=t style='left:517.20px;transform-origin:0 0;top:34.27px;font-size:8.3px;line-height:8.3px;font-weight:400;color:#4a5150;font-family:"Liberation Sans", sans-serif;transform:scaleX(0.8586);'>Painel Discricionárias</div>
<div class=t style='left:608.45px;transform-origin:0 0;top:34.27px;font-size:8.3px;line-height:8.3px;font-weight:400;color:#4a5150;font-family:"Liberation Sans", sans-serif;transform:scaleX(0.8513);'>DashGoo</div>
<div class=t style='left:661.20px;transform-origin:0 0;top:34.27px;font-size:8.3px;line-height:8.3px;font-weight:400;color:#4a5150;font-family:"Liberation Sans", sans-serif;transform:scaleX(0.8823);'>Update Widget | Ch...</div>
<div class=t style='left:755.45px;transform-origin:0 0;top:34.27px;font-size:8.3px;line-height:8.3px;font-weight:400;color:#4a5150;font-family:"Liberation Sans", sans-serif;transform:scaleX(0.8333);'>Facebook Business</div>
<div class=t style='left:838.70px;transform-origin:0 0;top:34.27px;font-size:8.3px;line-height:8.3px;font-weight:400;color:#4a5150;font-family:"Liberation Sans", sans-serif;transform:scaleX(0.8652);'>Google Trends</div>
<div class=t style='left:908.70px;transform-origin:0 0;top:34.27px;font-size:8.3px;line-height:8.3px;font-weight:400;color:#4a5150;font-family:"Liberation Sans", sans-serif;transform:scaleX(0.8915);'>Analytics</div>
<div class=t style='left:960.70px;transform-origin:0 0;top:34.27px;font-size:8.3px;line-height:8.3px;font-weight:400;color:#4a5150;font-family:"Liberation Sans", sans-serif;transform:scaleX(0.9307);'>help</div>
<div class=t style='left:947.50px;transform-origin:0 0;top:34.27px;font-size:8.3px;line-height:8.3px;font-weight:400;color:#7d8a9a;font-family:"Liberation Sans", sans-serif;transform:scaleX(0.9426);'>FB</div>
<div class=t style='left:186.54px;transform-origin:0 0;top:111.85px;font-size:22.24px;line-height:22.24px;font-weight:400;color:#1a8585;font-family:"Liberation Mono", monospace;transform:scaleX(0.8114);'>2</div>
<div class=t style='left:404.69px;transform-origin:0 0;top:111.68px;font-size:21.94px;line-height:21.94px;font-weight:400;color:#1a8585;font-family:"Liberation Mono", monospace;transform:scaleX(0.8451);'>5</div>
<div class=t style='left:416.66px;transform-origin:0 0;top:110.42px;font-size:21.0px;line-height:21.0px;font-weight:400;color:#1a8585;font-family:"Liberation Sans", sans-serif;transform:scaleX(0.8829);'>0</div>
<div class=t style='left:427.12px;transform-origin:0 0;top:111.68px;font-size:21.94px;line-height:21.94px;font-weight:400;color:#1a8585;font-family:"Liberation Mono", monospace;transform:scaleX(0.8000);'>,</div>
<div class=t style='left:434.49px;transform-origin:0 0;top:110.42px;font-size:21.0px;line-height:21.0px;font-weight:400;color:#1a8585;font-family:"Liberation Sans", sans-serif;transform:scaleX(0.8433);'>0</div>
<div class=t style='left:446.80px;transform-origin:0 0;top:111.68px;font-size:21.94px;line-height:21.94px;font-weight:400;color:#1a8585;font-family:"Liberation Mono", monospace;transform:scaleX(0.8052);'>%</div>
<div class=t style='left:623.48px;transform-origin:0 0;top:111.75px;font-size:22.24px;line-height:22.24px;font-weight:400;color:#1a8585;font-family:"Liberation Mono", monospace;transform:scaleX(0.7213);'>1</div>
<div class=t style='left:840.54px;transform-origin:0 0;top:111.81px;font-size:21.64px;line-height:21.64px;font-weight:400;color:#1a8585;font-family:"Liberation Mono", monospace;transform:scaleX(0.8182);'>5</div>
<div class=t style='left:852.68px;transform-origin:0 0;top:110.57px;font-size:20.71px;line-height:20.71px;font-weight:400;color:#1a8585;font-family:"Liberation Sans", sans-serif;transform:scaleX(0.8649);'>0</div>
<div class=t style='left:863.05px;transform-origin:0 0;top:111.81px;font-size:21.64px;line-height:21.64px;font-weight:400;color:#1a8585;font-family:"Liberation Mono", monospace;transform:scaleX(0.8000);'>,</div>
<div class=t style='left:870.92px;transform-origin:0 0;top:110.57px;font-size:20.71px;line-height:20.71px;font-weight:400;color:#1a8585;font-family:"Liberation Sans", sans-serif;transform:scaleX(0.8247);'>0</div>
<div class=t style='left:882.82px;transform-origin:0 0;top:110.57px;font-size:20.71px;line-height:20.71px;font-weight:400;color:#1a8585;font-family:"Liberation Sans", sans-serif;transform:scaleX(0.8247);'>0</div>
<div class=t style='left:895.00px;transform-origin:0 0;top:111.81px;font-size:21.64px;line-height:21.64px;font-weight:400;color:#1a8585;font-family:"Liberation Mono", monospace;transform:scaleX(0.8009);'>%</div>
<div class=t style='left:186.64px;transform-origin:0 0;top:386.93px;font-size:15.22px;line-height:15.22px;font-weight:400;color:#1a8585;font-family:"Liberation Mono", monospace;transform:scaleX(0.8074);'>1</div>
<div class=t style='left:196.04px;transform-origin:0 0;top:385.97px;font-size:14.57px;line-height:14.57px;font-weight:400;color:#1a8585;font-family:"Liberation Sans", sans-serif;transform:scaleX(0.9579);'>0</div>
<div class=t style='left:206.09px;transform-origin:0 0;top:385.97px;font-size:14.57px;line-height:14.57px;font-weight:400;color:#1a8585;font-family:"Liberation Sans", sans-serif;transform:scaleX(0.8721);'>0</div>
<div class=t style='left:216.71px;transform-origin:0 0;top:386.58px;font-size:14.2px;line-height:14.2px;font-weight:400;color:#1a8585;font-family:"Liberation Sans", sans-serif;transform:scaleX(1.0372);'>mil</div>
<div class=t style='left:404.64px;transform-origin:0 0;top:386.93px;font-size:15.22px;line-height:15.22px;font-weight:400;color:#1a8585;font-family:"Liberation Mono", monospace;transform:scaleX(0.8074);'>1</div>
<div class=t style='left:414.04px;transform-origin:0 0;top:385.97px;font-size:14.57px;line-height:14.57px;font-weight:400;color:#1a8585;font-family:"Liberation Sans", sans-serif;transform:scaleX(0.9579);'>0</div>
<div class=t style='left:424.09px;transform-origin:0 0;top:385.97px;font-size:14.57px;line-height:14.57px;font-weight:400;color:#1a8585;font-family:"Liberation Sans", sans-serif;transform:scaleX(0.8721);'>0</div>
<div class=t style='left:434.71px;transform-origin:0 0;top:386.58px;font-size:14.2px;line-height:14.2px;font-weight:400;color:#1a8585;font-family:"Liberation Sans", sans-serif;transform:scaleX(1.0372);'>mil</div>
<div class=t style='left:622.65px;transform-origin:0 0;top:386.53px;font-size:16.27px;line-height:16.27px;font-weight:400;color:#1a8585;font-family:"Liberation Mono", monospace;transform:scaleX(0.7427);'>1</div>
<div class=t style='left:631.85px;transform-origin:0 0;top:386.53px;font-size:16.27px;line-height:16.27px;font-weight:400;color:#1a8585;font-family:"Liberation Mono", monospace;transform:scaleX(0.7427);'>1</div>
<div class=t style='left:640.72px;transform-origin:0 0;top:386.53px;font-size:16.27px;line-height:16.27px;font-weight:400;color:#1a8585;font-family:"Liberation Mono", monospace;transform:scaleX(0.9080);'>7</div>
<div class=t style='left:645.98px;transform-origin:0 0;top:386.53px;font-size:16.27px;line-height:16.27px;font-weight:400;color:#1a8585;font-family:"Liberation Mono", monospace;transform:scaleX(0.8000);'>.</div>
<div class=t style='left:652.05px;transform-origin:0 0;top:386.53px;font-size:16.27px;line-height:16.27px;font-weight:400;color:#1a8585;font-family:"Liberation Mono", monospace;transform:scaleX(0.8708);'>5</div>
<div class=t style='left:839.74px;transform-origin:0 0;top:385.40px;font-size:15.71px;line-height:15.71px;font-weight:400;color:#1a8585;font-family:"Liberation Sans", sans-serif;transform:scaleX(1.0473);'>0</div>

</body></html>
